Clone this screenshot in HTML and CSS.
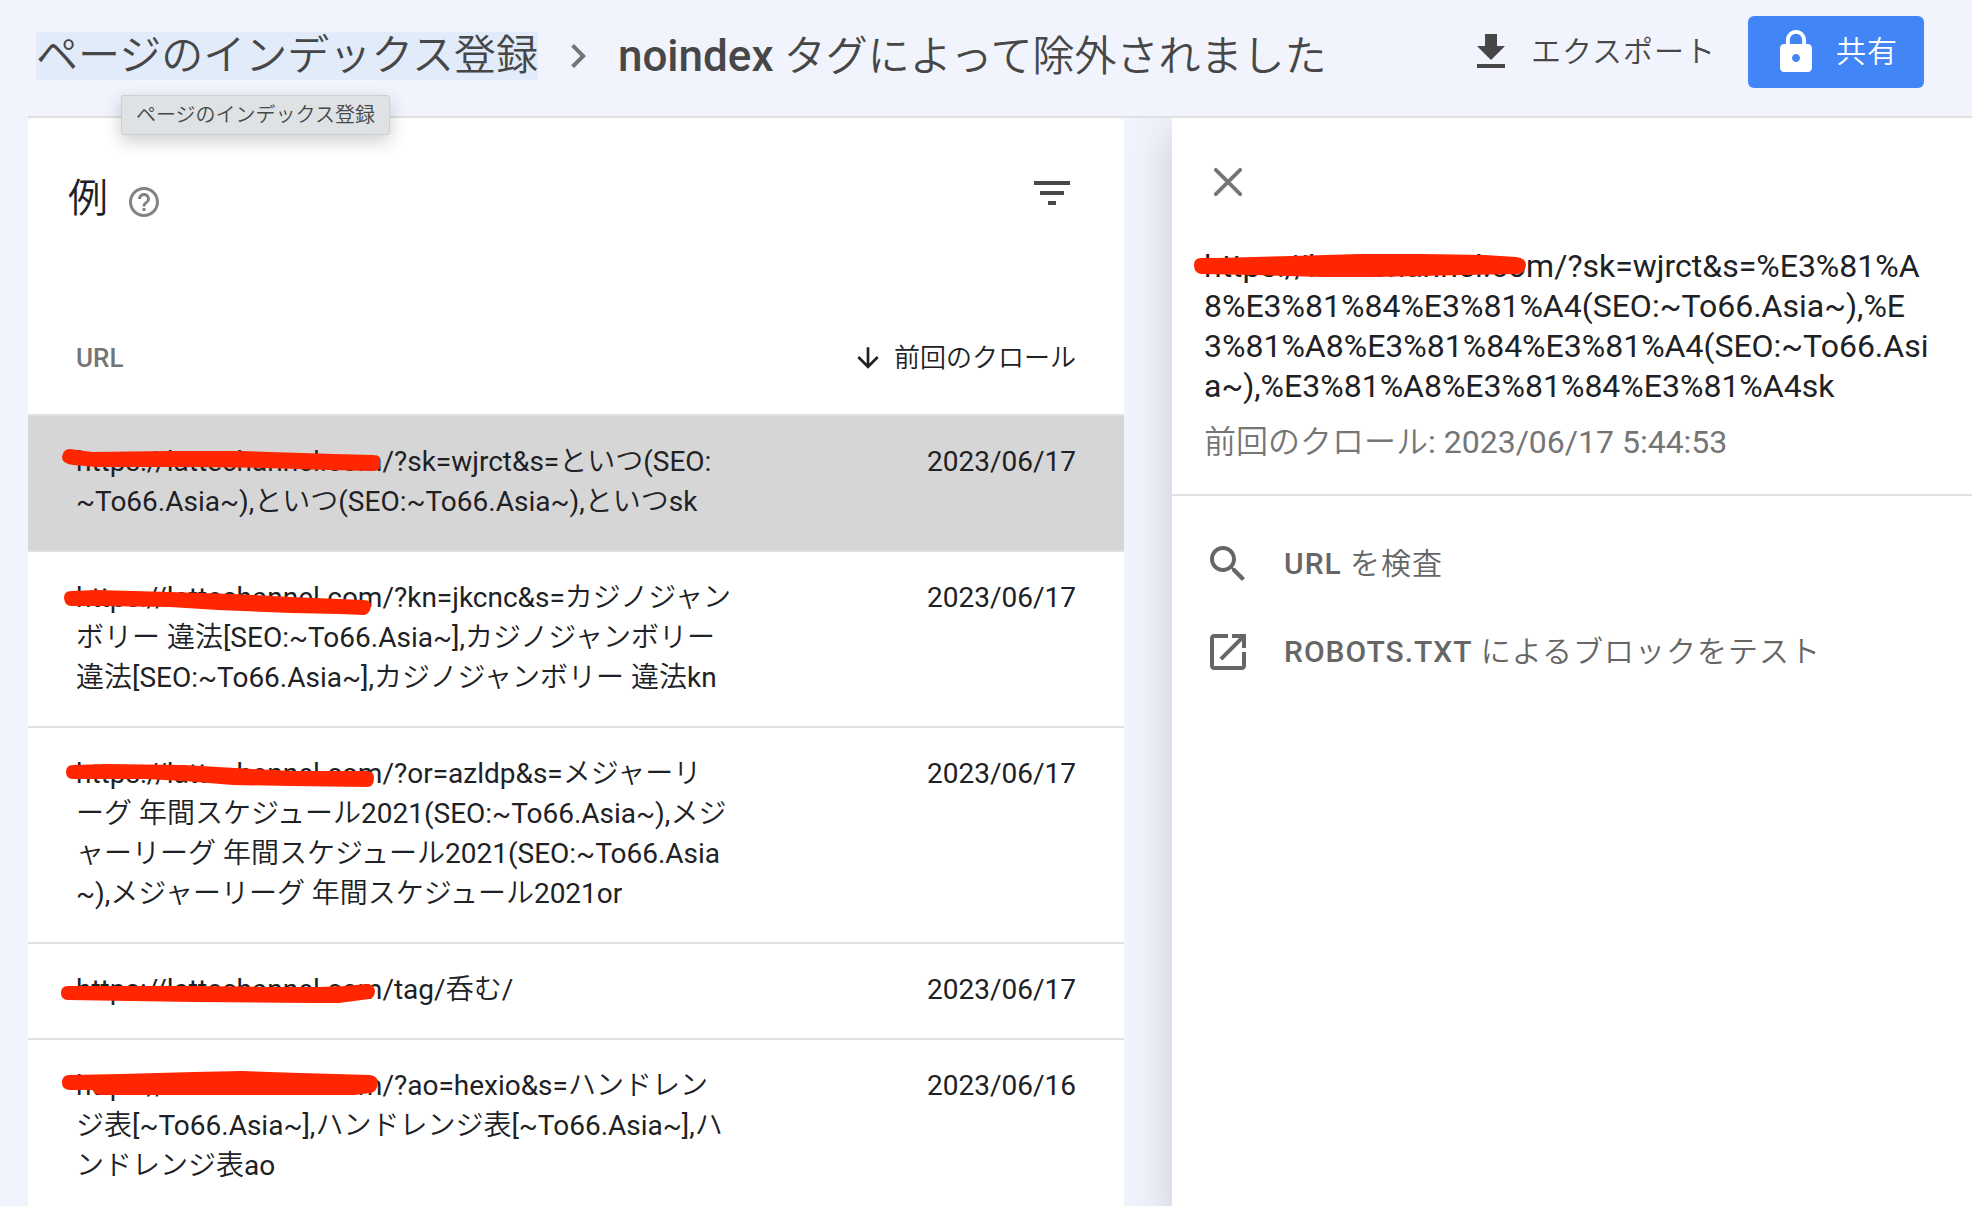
FILE: index.html
```html
<!DOCTYPE html>
<html lang="ja">
<head>
<meta charset="utf-8">
<meta name="viewport" content="width=device-width, initial-scale=1">
<title>noindex タグによって除外されました</title>
<link rel="stylesheet" href="styles.css">
</head>
<body>
<header class="topbar">
  <nav class="crumbs">
    <div class="crumb-parent">
      <a class="crumb-link" href="#">ページのインデックス登録</a>
      <span class="tooltip" role="tooltip">ページのインデックス登録</span>
    </div>
    <svg class="icon muted" viewBox="0 0 24 24" aria-hidden="true"><path d="M10 6L8.59 7.41 13.17 12l-4.58 4.59L10 18l6-6z"/></svg>
    <h1 class="page-title"><b>noindex</b> タグによって除外されました</h1>
  </nav>
  <div class="actions">
    <button class="btn" type="button">
      <svg class="icon" viewBox="0 0 24 24" aria-hidden="true"><path d="M19 9h-4V3H9v6H5l7 7 7-7zM5 18v2h14v-2H5z"/></svg>
      <span>エクスポート</span>
    </button>
    <button class="btn btn-primary" type="button">
      <svg class="icon" viewBox="0 0 24 24" aria-hidden="true"><path d="M18 8h-1V6c0-2.76-2.24-5-5-5S7 3.240 7 6v2H6c-1.100 0-2 .9-2 2v10c0 1.100.9 2 2 2h12c1.100 0 2-.9 2-2V10c0-1.100-.9-2-2-2zm-6 9c-1.100 0-2-.9-2-2s.9-2 2-2 2 .9 2 2-.9 2-2 2zm3.100-9H8.900V6c0-1.710 1.390-3.100 3.100-3.100s3.100 1.390 3.100 3.100v2z"/></svg>
      <span>共有</span>
    </button>
  </div>
</header>

<main class="content">
  <section class="card">
    <div class="card-head">
      <div class="card-title">
        <h2>例</h2>
        <button class="icon-btn help" type="button" aria-label="ヘルプ">
          <svg class="icon-help" viewBox="0 0 24 24" aria-hidden="true"><path d="M11 18h2v-2h-2v2zm1-16C6.480 2 2 6.480 2 12s4.480 10 10 10 10-4.480 10-10S17.520 2 12 2zm0 18c-4.410 0-8-3.590-8-8s3.590-8 8-8 8 3.590 8 8-3.590 8-8 8zm0-14c-2.210 0-4 1.790-4 4h2c0-1.100.9-2 2-2s2 .9 2 2c0 2-3 1.750-3 5h2c0-2.250 3-2.500 3-5 0-2.210-1.790-4-4-4z"/></svg>
        </button>
      </div>
      <button class="icon-btn" type="button" aria-label="フィルタ">
        <svg class="icon" viewBox="0 0 24 24" aria-hidden="true"><path d="M10 18h4v-2h-4v2zM3 6v2h18V6H3zm3 7h12v-2H6v2z"/></svg>
      </button>
    </div>
    <table class="examples">
      <thead>
        <tr>
          <th class="col-url" scope="col">URL</th>
          <th class="col-date" scope="col">
            <button class="sort" type="button">
              <svg class="icon-sort" viewBox="0 0 24 24" aria-hidden="true"><path d="M20 12l-1.410-1.410L13 16.170V4h-2v12.170l-5.580-5.590L4 12l8 8 8-8z"/></svg>
              <span>前回のクロール</span>
            </button>
          </th>
        </tr>
      </thead>
      <tbody>
        <tr class="selected">
          <td><span class="host">https://lattechannel.com<svg class="mark" viewBox="0 0 344 40" aria-hidden="true"><path d="M3 14Q4 7 10 7L32 10 110 9 182 9 274 12 314 13Q319 13 319 17V23Q319 27 313 27L270 26 207 24 134 23 37 23 13 21Q3 20 3 14Z"/></svg></span>/?sk=wjrct&amp;s=といつ(SEO:<br>~To66.Asia~),といつ(SEO:~To66.Asia~),といつsk</td>
          <td class="date">2023/06/17</td>
        </tr>
        <tr>
          <td><span class="host">https://lattechannel.com<svg class="mark" viewBox="0 0 344 40" aria-hidden="true"><path d="M5 19Q5 13 11 13L37 12 110 14 173 16 231 19 279 21 304 22Q310 22 310 27 309 34 304 35L279 34 231 33 158 30 110 27 37 26 11 26Q6 26 5 19Z"/></svg></span>/?kn=jkcnc&amp;s=カジノジャン<br>ボリー 違法[SEO:~To66.Asia~],カジノジャンボリー<br>違法[SEO:~To66.Asia~],カジノジャンボリー 違法kn</td>
          <td class="date">2023/06/17</td>
        </tr>
        <tr>
          <td><span class="host">https://lattechannel.com<svg class="mark" viewBox="0 0 344 40" aria-hidden="true"><path d="M7 17Q7 11 13 11L47 10 124 11 192 15 231 17H307Q313 17 313 23 313 31 307 31L231 30 173 29 124 25 85 23H13Q7 23 7 17Z"/></svg></span>/?or=azldp&amp;s=メジャーリ<br>ーグ 年間スケジュール2021(SEO:~To66.Asia~),メジ<br>ャーリーグ 年間スケジュール2021(SEO:~To66.Asia<br>~),メジャーリーグ 年間スケジュール2021or</td>
          <td class="date">2023/06/17</td>
        </tr>
        <tr>
          <td><span class="host">https://lattechannel.com<svg class="mark" viewBox="0 0 344 40" aria-hidden="true"><path d="M2 22Q2 16 8 16H134L207 17 260 17 284 16 307 14Q313 14 314 20 314 26 309 27L279 31 255 31 134 30 8 28Q2 28 2 22Z"/></svg></span>/tag/呑む/</td>
          <td class="date">2023/06/17</td>
        </tr>
        <tr>
          <td><span class="host">https://lattechannel.com<svg class="mark" viewBox="0 0 344 40" aria-hidden="true"><path d="M3 16Q3 9 9 9L61 8 134 6 182 5 240 7 310 9Q317 10 317 16 316 25 310 25L294 27H40Q35 26 33 22H9Q3 21 3 16Z"/></svg></span>/?ao=hexio&amp;s=ハンドレン<br>ジ表[~To66.Asia~],ハンドレンジ表[~To66.Asia~],ハ<br>ンドレンジ表ao</td>
          <td class="date">2023/06/16</td>
        </tr>
      </tbody>
    </table>
  </section>

  <aside class="panel">
    <div class="panel-info">
      <button class="icon-btn muted" type="button" aria-label="閉じる">
        <svg class="icon" viewBox="0 0 24 24" aria-hidden="true"><path d="M5.900 5.900l12.200 12.200M18.100 5.900L5.900 18.100" fill="none" stroke="currentColor" stroke-width="1.900" stroke-linecap="round"/></svg>
      </button>
      <p class="panel-url"><span class="host">https://lattechannel.com<svg class="mark" viewBox="0 0 344 40" aria-hidden="true"><path d="M7 18Q7 12 13 12H30L104 10 172 8 235 8 297 9 328 11Q337 12 337 18 336 26 330 26L276 27 187 29 135 29 67 27 13 26Q7 25 7 18Z"/></svg></span>/?sk=wjrct&amp;s=%E3%81%A<br>8%E3%81%84%E3%81%A4(SEO:~To66.Asia~),%E<br>3%81%A8%E3%81%84%E3%81%A4(SEO:~To66.Asi<br>a~),%E3%81%A8%E3%81%84%E3%81%A4sk</p>
      <p class="panel-crawl">前回のクロール: 2023/06/17 5:44:53</p>
    </div>
    <div class="panel-actions">
      <a class="panel-action" href="#">
        <svg class="icon" viewBox="0 0 24 24" aria-hidden="true"><path d="M15.500 14h-.79l-.28-.27C15.410 12.590 16 11.110 16 9.500 16 5.910 13.090 3 9.500 3S3 5.910 3 9.500 5.910 16 9.500 16c1.610 0 3.090-.59 4.230-1.570l.27.28v.79l5 4.990L20.490 19l-4.990-5zm-6 0C7.010 14 5 11.990 5 9.500S7.010 5 9.500 5 14 7.010 14 9.500 11.990 14 9.500 14z"/></svg>
        <span><b>URL</b> を検査</span>
      </a>
      <a class="panel-action" href="#">
        <svg class="icon" viewBox="0 0 24 24" aria-hidden="true"><path d="M19 19H5V5h7V3H5c-1.110 0-2 .9-2 2v14c0 1.100.89 2 2 2h14c1.100 0 2-.9 2-2v-7h-2v7zM14 3v2h3.590l-9.830 9.830 1.410 1.410L19 6.410V10h2V3h-7z"/></svg>
        <span><b>ROBOTS.TXT</b> によるブロックをテスト</span>
      </a>
    </div>
  </aside>
</main>
</body>
</html>
```

FILE: styles.css
```css
* {
  box-sizing: border-box;
}

body {
  display: flex;
  flex-direction: column;
  height: 100vh;
  margin: 0;
  overflow: hidden;
  background: #f1f4fd;
  color: #202124;
  font-family: Roboto, "Noto Sans CJK JP DemiLight", "Noto Sans CJK JP", sans-serif;
  font-size: 28px;
  line-height: 40px;
}

h1,
h2,
p {
  margin: 0;
  font-weight: 400;
}

b {
  font-weight: 500;
}

a {
  color: inherit;
  text-decoration: none;
}

button {
  padding: 0;
  border: 0;
  background: none;
  color: inherit;
  font: inherit;
  cursor: pointer;
}

svg {
  display: block;
  flex: none;
  fill: currentColor;
}

.icon {
  width: 48px;
  height: 48px;
}

.icon-btn {
  display: block;
}

.muted {
  color: #757575;
}

/* Top bar */

.topbar {
  display: flex;
  flex: none;
  align-items: flex-start;
  justify-content: space-between;
  margin-left: 28px;
  padding: 16px 48px 28px 8px;
  border-bottom: 2px solid #e0e0e0;
  color: #474747;
}

.crumbs {
  display: flex;
  gap: 16px;
  margin-top: 16px;
  font-size: 42px;
  line-height: 48px;
  white-space: nowrap;
}

.crumb-parent {
  position: relative;
}

.crumb-link {
  display: block;
  background: #e2ebfa;
  font-weight: 350;
}

.tooltip {
  position: absolute;
  top: 63px;
  left: 85px;
  z-index: 2;
  padding: 0 14px;
  border: 1px solid #cdd0d2;
  border-radius: 3px;
  background: #dfe2e4;
  box-shadow: 0 6px 18px rgba(0, 0, 0, 0.2);
  font-size: 20px;
  line-height: 38px;
}

.page-title {
  font-size: 42px;
  font-weight: 350;
}

.page-title b {
  font-size: 44px;
}

.actions {
  display: flex;
  gap: 32px;
}

.btn {
  display: flex;
  align-items: center;
  gap: 16px;
  height: 72px;
  white-space: nowrap;
}

.btn,
.panel-action {
  font-size: 30px;
  font-weight: 350;
  letter-spacing: 1px;
}

.btn-primary {
  padding: 0 26px 0 24px;
  border-radius: 6px;
  background: #4285f6;
  color: #fff;
}

/* Layout below the bar */

.content {
  display: flex;
  flex: 1;
  gap: 48px;
  min-height: 0;
  padding-left: 28px;
  overflow: hidden;
}

/* Examples */

.card {
  flex: 1096 1 0;
  align-self: flex-start;
  border-radius: 6px 6px 0 0;
  background: #fff;
}

.card-head {
  display: flex;
  align-items: flex-start;
  justify-content: space-between;
  height: 184px;
  padding: 51px 48px 0 40px;
  color: #474747;
}

.card-title {
  display: flex;
  align-items: flex-end;
  gap: 18px;
}

.card-title h2 {
  color: #202124;
  font-size: 40px;
  font-weight: 350;
  line-height: 60px;
}

.help {
  padding-bottom: 9px;
  color: #828282;
}

.icon-help {
  width: 36px;
  height: 36px;
}

.examples {
  width: 100%;
  border-collapse: separate;
  border-spacing: 0;
}

.examples th {
  height: 114px;
  padding: 0 48px;
  border-bottom: 2px solid #e0e0e0;
  font-size: 26px;
  font-weight: 500;
  text-align: left;
}

.examples .col-url {
  color: #757575;
}

.examples .col-date {
  width: 372px;
}

.sort {
  display: flex;
  align-items: center;
  gap: 10px;
  margin-left: auto;
  font-weight: 350;
  white-space: nowrap;
}

.icon-sort {
  width: 32px;
  height: 32px;
}

.examples td {
  padding: 26px 0 28px 48px;
  border-bottom: 2px solid #e0e0e0;
  vertical-align: top;
  white-space: nowrap;
}

.examples .date {
  padding-right: 48px;
  text-align: right;
}

.selected td {
  background: #d6d6d6;
}

/* Pen stroke across the host name */

.host {
  position: relative;
}

.mark {
  position: absolute;
  top: -2px;
  left: -16px;
  width: 344px;
  height: 40px;
  fill: #ff2600;
  stroke: #ff2600;
  stroke-width: 2;
  stroke-linejoin: round;
  pointer-events: none;
}

.panel .mark {
  top: 0;
}

/* Detail panel */

.panel {
  z-index: 1;
  flex: 800 1 0;
  background: #fff;
  box-shadow: 0 16px 40px rgba(60, 70, 70, 0.25);
}

.panel-info {
  padding: 40px 32px 32px;
  border-bottom: 2px solid #e0e0e0;
  font-size: 32px;
}

.panel-url {
  margin-top: 40px;
  white-space: nowrap;
}

.panel-crawl {
  margin-top: 16px;
  color: #757575;
}

.panel-actions {
  padding: 24px 32px;
  color: #666;
}

.panel-action {
  display: flex;
  align-items: center;
  gap: 32px;
  height: 88px;
}
```
